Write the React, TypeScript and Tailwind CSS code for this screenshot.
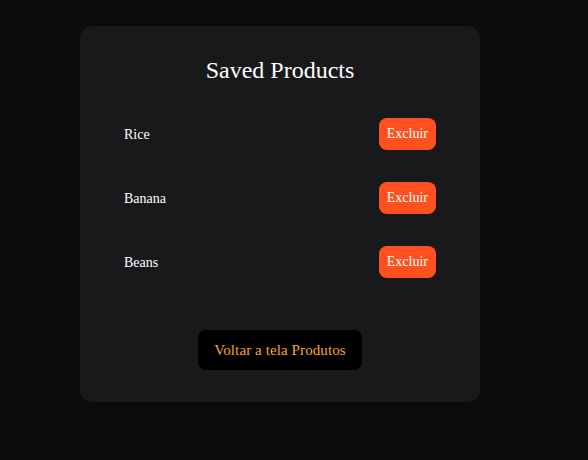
import React, { useState } from 'react';

const initialProducts = ['Rice', 'Banana', 'Beans'];

const App: React.FC = () => {
  const [products, setProducts] = useState<string[]>(initialProducts);

  const removeProduct = (name: string) => {
    setProducts(prev => prev.filter(p => p !== name));
  };

  return (
    <div
      className="min-h-screen bg-[#0b0b0d] pl-20 pt-[26px]"
      style={{ fontFamily: '"Liberation Serif", "Times New Roman", serif' }}
    >
      <div className="w-[400px] rounded-xl bg-[#19191c] px-11 pt-[30px] pb-8 flex flex-col">
        <h2 className="text-center text-2xl leading-[28px] text-white">Saved Products</h2>

        {/* Product list */}
        <ul className="mt-[34px] flex flex-col gap-8">
          {products.map(product => (
            <li key={product} className="flex h-8 items-center justify-between">
              <span className="pt-px text-sm text-white">{product}</span>
              <button
                onClick={() => removeProduct(product)}
                className="rounded-lg bg-[#ff5120] px-2 py-2 text-sm leading-4 text-white"
              >
                Excluir
              </button>
            </li>
          ))}
        </ul>

        <div className="mt-[52px] flex justify-center">
          <button className="h-10 rounded-lg bg-black px-4 text-[15px] tracking-[0.1px] text-[#f5a623]">
            Voltar a tela Produtos
          </button>
        </div>
      </div>
    </div>
  );
};

export default App;
